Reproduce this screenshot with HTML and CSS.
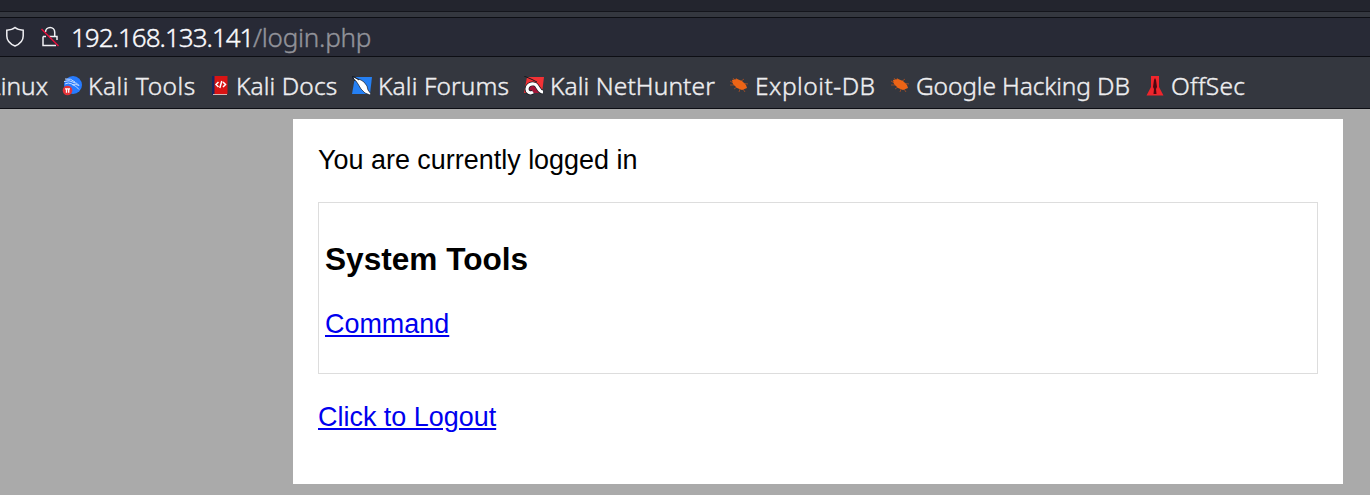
FILE: index.html
```
<!DOCTYPE html>
<html lang="en">
<head>
<meta charset="utf-8">
<title>Login</title>
<link rel="stylesheet" href="styles.css">
</head>
<body>
<header class="browser">
  <div class="tabs"></div>
  <div class="gap"></div>
  <div class="address">
    <svg class="shield" width="20" height="22" viewBox="0 0 20 22"><path d="M10 1.500C8 3.200 5 4 1.800 4.200V10c0 4.500 3.400 8 8.200 10 4.800-2 8.200-5.500 8.200-10V4.200C15 4 12 3.200 10 1.500Z"/></svg>
    <svg class="lock" width="20" height="22" viewBox="0 0 20 22"><path d="M5.500 6a4.600 4.600 0 0 1 9.200 0v4.500M9 10.500h8V14M3 10.500V19.500H16M3 10.500H6"/><path class="slash" d="M1.500 3 18.500 20"/></svg>
    <span class="url"><span class="host">192.168.133.141</span><span class="path">/login.php</span></span>
  </div>
  <nav class="bookmarks">
    <a class="bookmark cut"><span class="label linux">Linux</span></a>
    <a class="bookmark">
      <svg class="icon" width="20" height="20" viewBox="0 0 20 20"><circle cx="11" cy="9" r="9" fill="#277bff"/><path d="M2 5.500q5-2 10 1 3 0 5 3-4-2-7-1 4 1 7 5M3 3q6-1 10 3M3 8q3-2 7 0" fill="none" stroke="#c5dbff" stroke-width="1"/><circle cx="5.500" cy="14.500" r="4.800" fill="#e53338"/><path d="M3 12.800h5M4.500 12.800v4M6.700 12.800v4" stroke="#fff" stroke-width="1.300"/></svg>
      <span class="label tools">Kali Tools</span></a>
    <a class="bookmark">
      <svg class="icon" width="20" height="20" viewBox="0 0 20 20"><path fill="#162761" d="M2 0h3v19H2z"/><path fill="#d91414" d="M4.500 0H17.500v18h-13z"/><path fill="#d6b7b5" d="M3 18h14v1H3z"/><path fill="none" stroke="#fff" stroke-width="1.500" d="m8.500 6-2.500 2.500L8.500 11M13 6l2.500 2.500L13 11M11.800 5l-2 7"/></svg>
      <span class="label docs">Kali Docs</span></a>
    <a class="bookmark">
      <svg class="icon" width="20" height="20" viewBox="0 0 20 20"><path fill="#2580f4" d="M3 1h17l-2 17H0z"/><path fill="#fff" stroke="#151d2b" stroke-width=".7" d="m1 1 5 2 3 1 3 2 3 4 1 4 3 4-1 1-5-2-4-4-3-5-2-3-3-2Z"/><path fill="none" stroke="#151d2b" d="m0 0 3 5M1 0l6 4"/></svg>
      <span class="label forums">Kali Forums</span></a>
    <a class="bookmark">
      <svg class="icon" width="20" height="20" viewBox="0 0 20 20"><path fill="#f23135" d="M3 1h17l-2 16H0z"/><path fill="#a21637" d="m5 10 6-3 5 10H3z"/><path fill="none" stroke="#171b20" stroke-width="4.600" d="M19 16c-5 0-5-8-9-8-4-1-7 2-7 5 0 3 3 5 6 3"/><path fill="none" stroke="#fff" stroke-width="3.200" d="M19 16c-5 0-5-8-9-8-4-1-7 2-7 5 0 3 3 5 6 3"/><path fill="none" stroke="#171b20" d="m0 0 7 3 6 3"/></svg>
      <span class="label nethunter">Kali NetHunter</span></a>
    <a class="bookmark">
      <svg class="icon bug" width="20" height="20" viewBox="0 0 20 20"><path class="legs" d="m6 8-5-3M7 6 4 2M9 5 7 2M11 6l4-3M13 7l6 1M6 9 1 9M8 11l-3 2M11 13l-1 3M14 13l2 3"/><path class="body" d="m3 4 5-1 5 2 4 4 1 3-5 2-5-2-4-4Z"/></svg>
      <span class="label exploit">Exploit-DB</span></a>
    <a class="bookmark">
      <svg class="icon bug" width="20" height="20" viewBox="0 0 20 20"><path class="legs" d="m6 8-5-3M7 6 4 2M9 5 7 2M11 6l4-3M13 7l6 1M6 9 1 9M8 11l-3 2M11 13l-1 3M14 13l2 3"/><path class="body" d="m3 4 5-1 5 2 4 4 1 3-5 2-5-2-4-4Z"/></svg>
      <span class="label google">Google Hacking DB</span></a>
    <a class="bookmark">
      <svg class="icon" width="20" height="20" viewBox="0 0 20 20"><path fill="#ef252c" d="M6 0h8v11l4.500 8.500h-17L6 11Z"/><path fill="#4b0710" d="M9 4 10 2l1 2 1 7-1 2 .5 5h-3l.5-5-1-2Z"/></svg>
      <span class="label offsec">OffSec</span></a>
  </nav>
</header>
<main class="page">
  <section class="card">
    <p class="message">You are currently logged in</p>
    <div class="panel">
      <h3 class="title">System Tools</h3>
      <a class="link" href="#">Command</a>
    </div>
    <a class="link" href="#">Click to Logout</a>
  </section>
</main>
</body>
</html>
```
FILE: styles.css
```
* { box-sizing: border-box; }
body { margin: 0; height: 495px; overflow: hidden; background: #aaa; font: 26.95px/31px "Liberation Sans", Arial, sans-serif; color: #000; }
.browser { font-family: "Noto Sans", sans-serif; font-weight: 300; -webkit-text-stroke: .4px currentColor; background: #34373f; }
.tabs { height: 12px; background: #23252e; border-bottom: 1px solid #14151c; }
.gap { height: 5px; }
.address { height: 40px; border: solid #0d0e14; border-width: 1px 0; background: #282a36; display: flex; align-items: center; padding-left: 5px; }
.address svg { fill: none; stroke: #f0f0f4; stroke-width: 1.5; flex: none; }
.shield { margin-right: 15px; }
.address .slash { stroke: #e6103e; stroke-width: 1.5; }
.lock { margin-right: 11px; }
.url { display: flex; font-size: 26px; line-height: 38px; white-space: nowrap; }
.host { width: 182px; color: #fbfbfe; letter-spacing: -.98px; }
.path { color: #92939a; letter-spacing: -.25px; }
.bookmarks { height: 52px; border-bottom: 1px solid #0d0e14; display: grid; grid-template-columns: 62px 148px 142px 172px 205px 161px 255px 120px; align-items: center; }
.bookmark { display: flex; align-items: center; gap: 6px; color: #eeeef0; font-size: 24.5px; line-height: 40px; white-space: nowrap; min-width: 0; padding-top: 7px; }
.label { margin-top: -1px; }
.icon { flex: none; }
.tools { letter-spacing: .5px; }
.docs { letter-spacing: .1px; }
.forums { letter-spacing: .12px; }
.nethunter { letter-spacing: .1px; }
.google { letter-spacing: -.12px; }
.exploit { letter-spacing: .5px; }
.offsec { letter-spacing: .3px; }
.cut { justify-content: flex-end; padding-right: 14px; overflow: hidden; }
.bug .body { fill: #ed6416; }
.bug .legs { fill: none; stroke: #ad4f22; stroke-width: .8; }
.page { padding: 10px 27px 11px 293px; }
.card { height: 365px; background: #fff; padding: 26px 25px 0; }
.message { margin: 0 0 26px; }
.panel { height: 172px; border: 1px solid #ddd; padding: 38px 6px 0; margin-bottom: 28px; }
.title { margin: 0 0 32px; font-size: 31.6px; line-height: 36px; }
.link { color: #00e; text-decoration: underline; display: block; }
```
